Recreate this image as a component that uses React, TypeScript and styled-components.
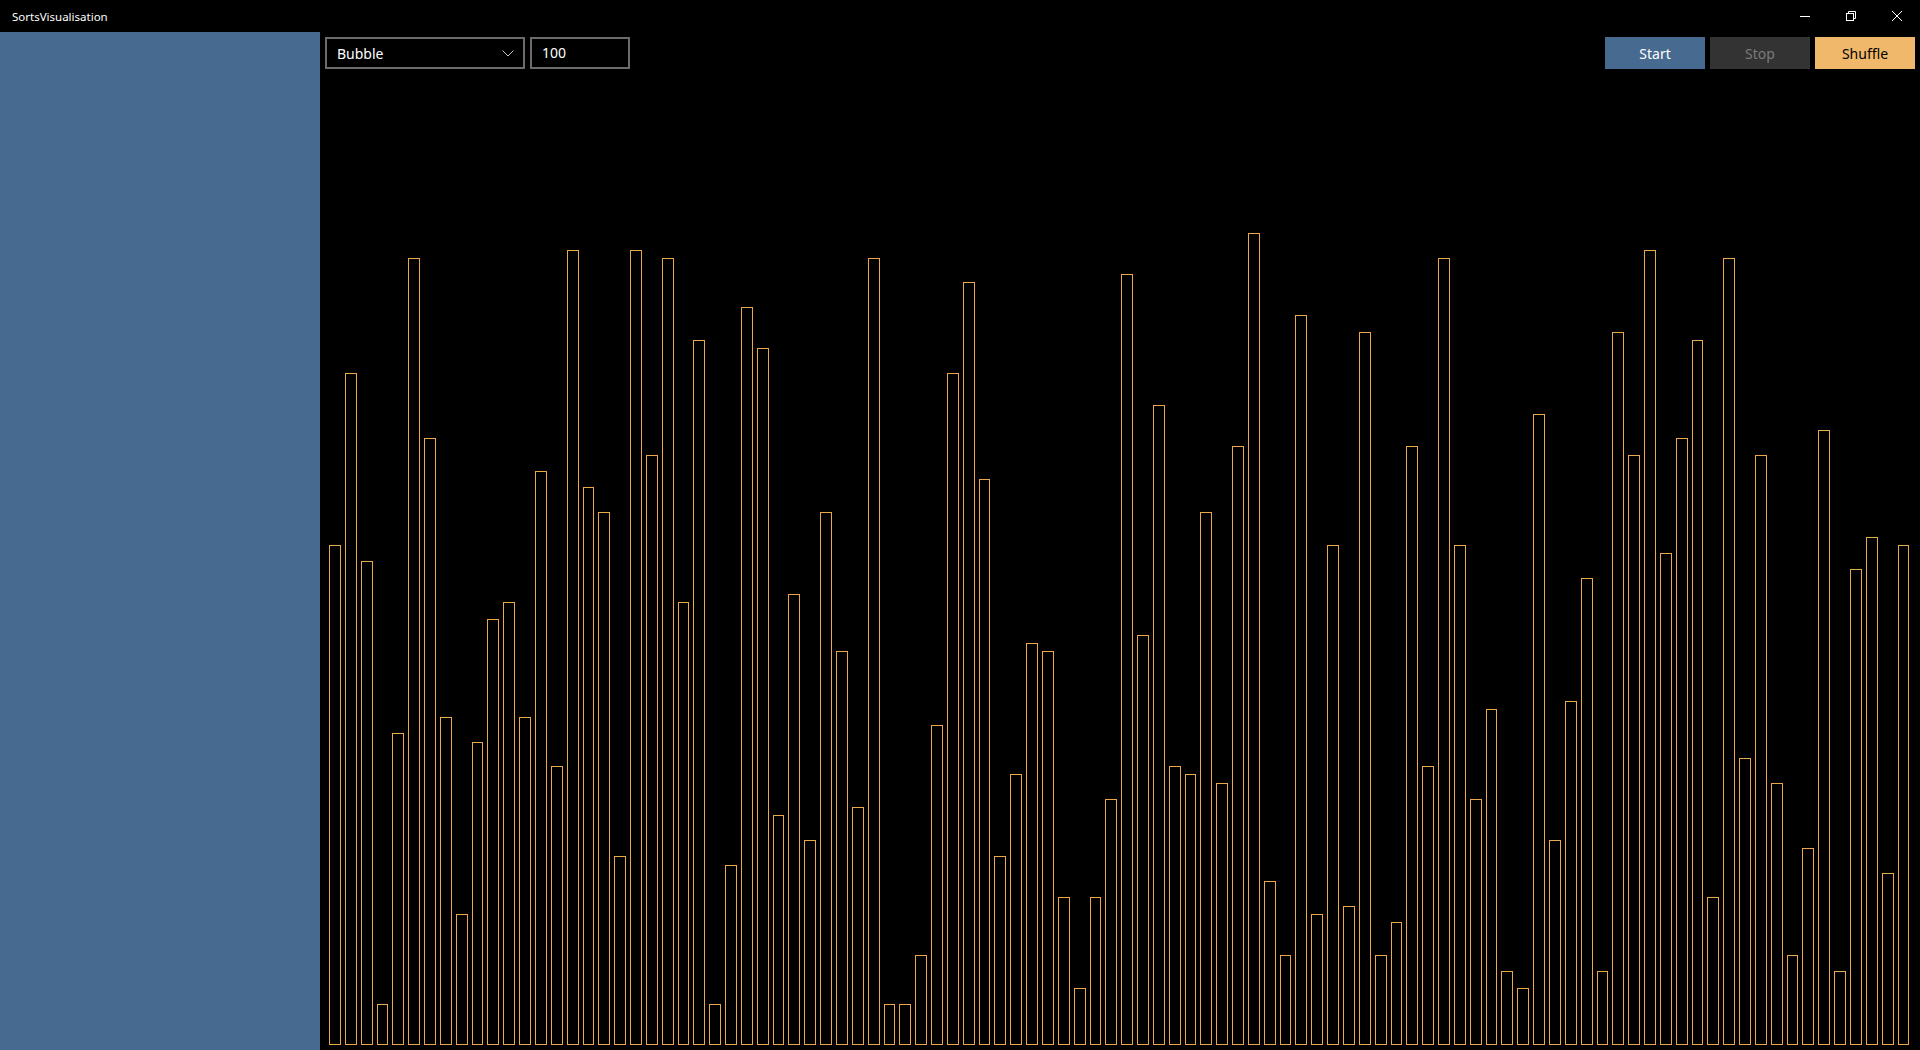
import React from 'react'
import styled, { createGlobalStyle } from 'styled-components'

const values = [
  61, 82, 59, 5, 38, 96, 74, 40, 16, 37, 52, 54, 40, 70, 34, 97, 68, 65, 23, 97,
  72, 96, 54, 86, 5, 22, 90, 85, 28, 55, 25, 65, 48, 29, 96, 5, 5, 11, 39, 82,
  93, 69, 23, 33, 49, 48, 18, 7, 18, 30, 94, 50, 78, 34, 33, 65, 32, 73, 99, 20,
  11, 89, 16, 61, 17, 87, 11, 15, 73, 34, 96, 61, 30, 41, 9, 7, 77, 25, 42, 57,
  9, 87, 72, 97, 60, 74, 86, 18, 96, 35, 72, 32, 11, 24, 75, 9, 58, 62, 21, 61,
]

const UNIT = 8.2

const color = {
  accent: '#466a90',
  bar: '#eca94c',
  shuffle: '#f0b86a',
  stop: '#333333',
  stopText: '#7a7a7a',
  border: '#6b6b6b',
}

const GlobalStyle = createGlobalStyle`
  html, body {
    margin: 0;
    padding: 0;
    background: #000;
    overflow: hidden;
  }

  body {
    font-family: 'Noto Sans', 'Open Sans', sans-serif;
    color: #fff;
  }
`

const MinimizeIcon = () => (
  <svg width="10" height="10" viewBox="0 0 10 10">
    <path d="M0 5.5h10" stroke="#fff" strokeWidth="1" />
  </svg>
)

const RestoreIcon = () => (
  <svg width="10" height="10" viewBox="0 0 10 10" fill="none" stroke="#fff" strokeWidth="1">
    <rect x="0.5" y="2.5" width="7" height="7" />
    <path d="M2.5 2.5V0.5h7v7h-2" />
  </svg>
)

const CloseIcon = () => (
  <svg width="10" height="10" viewBox="0 0 10 10" stroke="#fff" strokeWidth="1">
    <path d="M0 0L10 10M10 0L0 10" />
  </svg>
)

const Chevron = () => (
  <svg width="12" height="7" viewBox="0 0 12 7" fill="none" stroke="#c8c8c8" strokeWidth="1">
    <path d="M0.5 0.5L6 6L11.5 0.5" />
  </svg>
)

export default function App() {
  return (
    <Window>
      <GlobalStyle />
      <TitleBar>
        <Title>SortsVisualisation</Title>
        <Controls>
          <ControlButton><MinimizeIcon /></ControlButton>
          <ControlButton><RestoreIcon /></ControlButton>
          <ControlButton><CloseIcon /></ControlButton>
        </Controls>
      </TitleBar>
      <Body>
        <Sidebar />
        <Main>
          <Toolbar>
            <Select>
              <span>Bubble</span>
              <Chevron />
            </Select>
            <CountInput>100</CountInput>
            <Spacer />
            <ActionButton $variant="start">Start</ActionButton>
            <ActionButton $variant="stop">Stop</ActionButton>
            <ActionButton $variant="shuffle">Shuffle</ActionButton>
          </Toolbar>
          <Chart>
            {values.map((v, i) => (
              <Bar key={i} style={{ height: v * UNIT }} />
            ))}
          </Chart>
        </Main>
      </Body>
    </Window>
  )
}

const Window = styled.div`
  width: 100vw;
  height: 100vh;
  display: flex;
  flex-direction: column;
  background: #000;
`

const TitleBar = styled.div`
  height: 32px;
  flex-shrink: 0;
  display: flex;
  align-items: center;
  justify-content: space-between;
`

const Title = styled.span`
  padding-left: 12px;
  font-size: 11.5px;
  color: #fff;
`

const Controls = styled.div`
  display: flex;
  height: 100%;
`

const ControlButton = styled.div`
  width: 46px;
  height: 100%;
  display: flex;
  align-items: center;
  justify-content: center;
`

const Body = styled.div`
  flex: 1;
  display: flex;
  min-height: 0;
`

const Sidebar = styled.div`
  width: 320px;
  flex-shrink: 0;
  background: ${color.accent};
`

const Main = styled.div`
  flex: 1;
  display: flex;
  flex-direction: column;
  min-width: 0;
`

const Toolbar = styled.div`
  display: flex;
  align-items: center;
  gap: 5px;
  padding: 5px 5px 0 5px;
`

const Field = styled.div`
  box-sizing: border-box;
  height: 32px;
  border: 2px solid ${color.border};
  display: flex;
  align-items: center;
  padding: 0 10px;
  font-size: 14px;
  color: #fff;
`

const Select = styled(Field)`
  width: 200px;
  justify-content: space-between;
  padding-right: 9px;
`

const CountInput = styled(Field)`
  width: 100px;
  padding-bottom: 2px;
`

const Spacer = styled.div`
  flex: 1;
`

const variants = {
  start: { bg: color.accent, fg: '#fff' },
  stop: { bg: color.stop, fg: color.stopText },
  shuffle: { bg: color.shuffle, fg: '#000' },
}

const ActionButton = styled.div<{ $variant: keyof typeof variants }>`
  width: 100px;
  height: 32px;
  display: flex;
  align-items: center;
  justify-content: center;
  font-size: 14px;
  background: ${(p) => variants[p.$variant].bg};
  color: ${(p) => variants[p.$variant].fg};
`

const Chart = styled.div`
  flex: 1;
  display: flex;
  align-items: flex-end;
  padding: 0 8px 5px 7px;
`

const Bar = styled.div`
  flex: 1 1 0;
  margin: 0 2px;
  box-sizing: border-box;
  border: 1px solid ${color.bar};
`
